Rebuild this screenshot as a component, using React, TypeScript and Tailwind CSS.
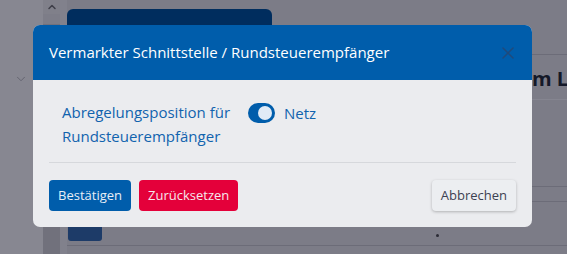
import { X, ChevronUp, ChevronDown } from 'lucide-react';

const font = { fontFamily: '"Open Sans", "Noto Sans", sans-serif' };

function Background() {
  return (
    <div className="flex h-[254px] w-[567px] bg-[#7c7c87]">
      {/* Sidebar */}
      <div className="flex w-[43px] shrink-0 flex-col items-center bg-[#878791] pt-[72px]">
        <ChevronDown size={14} className="ml-[-2px] text-[#5f5f6b]" strokeWidth={1.5} />
      </div>
      {/* Scroll column */}
      <div className="flex w-[17px] shrink-0 flex-col items-center bg-[#71717c]">
        <div className="flex h-[14px] w-full items-center justify-center bg-[#80808a]">
          <ChevronUp size={12} className="text-[#3e3e48]" strokeWidth={3} />
        </div>
        <div className="h-[10px] w-full bg-[#7d7d88]" />
      </div>
      {/* Main */}
      <div className="flex min-w-0 flex-1 flex-col overflow-hidden border-l-[7px] border-[#81818c]">
        <div className="h-[9px]" />
        <div className="flex">
          <div className="flex h-[40px] w-[205px] items-start rounded-t-[6px] bg-[#002d5e] pl-[14px] pt-[14px] text-[15px] text-[#5f7391]">
            <span className="w-[166px]">Neue Aktivität</span>
            <span className="mt-[2px] h-[14px] border-l border-[#6b7d99]" />
          </div>
        </div>
        <div className="mt-[5px] border-t border-[#6c6c78]" />
        <div className="mt-[12px] whitespace-nowrap pl-[442px] text-[20px] font-bold leading-[24px] text-[#141828]">zum Lastgang</div>
        <div className="mt-[8px] border-t border-[#858590]" />
        <div className="mt-[86px] border-t border-[#6c6c78]" />
        <div className="mt-[14px] border-t border-[#6c6c78]" />
        <div className="flex items-start pl-[1px] pt-[22px]">
          <div className="h-[17px] w-[34px] rounded-[3px] bg-[#1d3b68]" />
          <div className="ml-[334px] mt-[10px] h-[3px] w-[3px] rounded-full bg-[#2b2b35]" />
        </div>
        <div className="mt-[4px] border-t border-[#6c6c78]" />
      </div>
    </div>
  );
}

export default function App() {
  return (
    <div className="relative h-[254px] w-[567px] overflow-hidden" style={font}>
      <Background />

      {/* Modal */}
      <div className="absolute left-[33px] top-[25px] w-[499px] overflow-hidden rounded-[7px] bg-[#ebecef]">
        <div className="flex h-[55px] items-center justify-between bg-[#005dab] pl-4 pr-[14px]">
          <h2 className="text-[15px] text-white">Vermarkter Schnittstelle / Rundsteuerempfänger</h2>
          <X size={20} strokeWidth={1.8} className="text-[#1f4a7c]" />
        </div>

        <div className="flex items-start pb-[14px] pl-[29px] pt-[20px]">
          <div className="w-[178px] text-[15px] leading-[24px] text-[#1163ae]">
            Abregelungsposition für Rundsteuerempfänger
          </div>
          <div className="ml-[8px] mt-[2px] flex items-center gap-[9px]">
            <div className="flex h-[20px] w-[27px] items-center justify-end rounded-full bg-[#005dab] pr-[3px]">
              <div className="h-[14px] w-[14px] rounded-full bg-[#e1ebf6]" />
            </div>
            <span className="text-[15px] text-[#1163ae]">Netz</span>
          </div>
        </div>

        <div className="mx-4 border-t border-[#d6d8dc]" />

        <div className="flex items-center justify-between px-4 pb-4 pt-[17px]">
          <div className="flex gap-[8px]">
            <button className="h-[31px] rounded-[4px] bg-[#005dab] px-[9px] text-[13px] text-[#e8eef6]">
              Bestätigen
            </button>
            <button className="h-[31px] rounded-[4px] bg-[#e4003a] px-[9px] text-[13px] text-[#f6e8ec]">
              Zurücksetzen
            </button>
          </div>
          <button className="h-[31px] rounded-[4px] bg-[#eceef1] px-[9px] text-[13px] text-[#3c4152] shadow-[0_1px_3px_rgba(0,0,0,0.25)]">
            Abbrechen
          </button>
        </div>
      </div>
    </div>
  );
}
